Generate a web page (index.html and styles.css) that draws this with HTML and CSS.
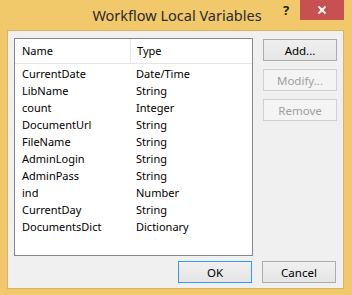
FILE: index.html
```html
<!DOCTYPE html>
<html lang="en">
<head>
  <meta charset="UTF-8">
  <title>Workflow Local Variables</title>
  <link rel="stylesheet" href="styles.css">
</head>
<body>
  <div class="window">
    <div class="titlebar">
      <div class="title">Workflow Local Variables</div>
      <div class="help">?</div>
      <div class="close">
        <svg width="10" height="10" viewBox="0 0 10 10"><path d="M1.5 1.5 L8.5 8.5 M8.5 1.5 L1.5 8.5" stroke="#fff" stroke-width="1.8"/></svg>
      </div>
    </div>

    <div class="client">
      <div class="main">
        <div class="listbox">
          <div class="list-head">
            <div class="col-name">Name</div>
            <div class="col-type">Type</div>
          </div>
          <div class="list-row"><div class="col-name">CurrentDate</div><div class="col-type">Date/Time</div></div>
          <div class="list-row"><div class="col-name">LibName</div><div class="col-type">String</div></div>
          <div class="list-row"><div class="col-name">count</div><div class="col-type">Integer</div></div>
          <div class="list-row"><div class="col-name">DocumentUrl</div><div class="col-type">String</div></div>
          <div class="list-row"><div class="col-name">FileName</div><div class="col-type">String</div></div>
          <div class="list-row"><div class="col-name">AdminLogin</div><div class="col-type">String</div></div>
          <div class="list-row"><div class="col-name">AdminPass</div><div class="col-type">String</div></div>
          <div class="list-row"><div class="col-name">ind</div><div class="col-type">Number</div></div>
          <div class="list-row"><div class="col-name">CurrentDay</div><div class="col-type">String</div></div>
          <div class="list-row"><div class="col-name">DocumentsDict</div><div class="col-type">Dictionary</div></div>
        </div>

        <div class="side-buttons">
          <button class="btn">Add...</button>
          <button class="btn" disabled>Modify...</button>
          <button class="btn" disabled>Remove</button>
        </div>
      </div>

      <div class="footer">
        <button class="btn btn-default">OK</button>
        <button class="btn">Cancel</button>
      </div>
    </div>
  </div>
</body>
</html>
```

FILE: styles.css
```css
html, body {
  margin: 0;
  padding: 0;
}
body {
  font-family: "Noto Sans", "Open Sans", sans-serif;
  font-size: 11px;
  color: #000;
}
.window {
  width: 352px;
  height: 295px;
  background: #f1c96b;
  display: flex;
  flex-direction: column;
}
.titlebar {
  height: 30px;
  display: flex;
  position: relative;
}
.title {
  flex: 1;
  text-align: center;
  font-size: 14.5px;
  line-height: 30px;
  color: #2b2b2b;
  padding-left: 2px;
}
.help {
  position: absolute;
  left: 283px;
  top: 1px;
  font-weight: bold;
  font-size: 13px;
  color: #222;
}
.close {
  position: absolute;
  left: 300px;
  top: 0;
  width: 44px;
  height: 20px;
  background: #c75050;
  display: flex;
  align-items: center;
  justify-content: center;
}
.client {
  margin: 0 8px 6px 7px;
  flex: 1;
  background: #f0f0f0;
  border: 1px solid #d9b462;
  padding: 7px 6px 0 6px;
  display: flex;
  flex-direction: column;
}
.main {
  display: flex;
}
.listbox {
  width: 240px;
  height: 218px;
  box-sizing: border-box;
  border: 1px solid #828790;
  background: #fff;
}
.list-head {
  display: flex;
  height: 24px;
  line-height: 24px;
  border-bottom: 1px solid #e5e5e5;
  margin-bottom: 1px;
}
.list-head .col-name {
  border-right: 1px solid #e5e5e5;
}
.list-row {
  display: flex;
  height: 17px;
  line-height: 17px;
}
.col-name {
  width: 108px;
  padding-left: 7px;
}
.col-type {
  padding-left: 6px;
}
.side-buttons {
  margin-left: 10px;
  padding-top: 1px;
  display: flex;
  flex-direction: column;
  gap: 8px;
}
.btn {
  width: 74px;
  height: 22px;
  box-sizing: border-box;
  font-family: inherit;
  font-size: 11.5px;
  color: #000;
  border: 1px solid #acacac;
  background: linear-gradient(#f0f0f0, #e5e5e5);
  padding: 0;
}
.btn:disabled {
  color: #a0a0a0;
  border-color: #d0d0d0;
  background: #f4f4f4;
}
.btn-default {
  border-color: #3399ff;
}
.footer {
  display: flex;
  justify-content: flex-end;
  gap: 10px;
  margin-top: 5px;
  padding-right: 1px;
}
```
